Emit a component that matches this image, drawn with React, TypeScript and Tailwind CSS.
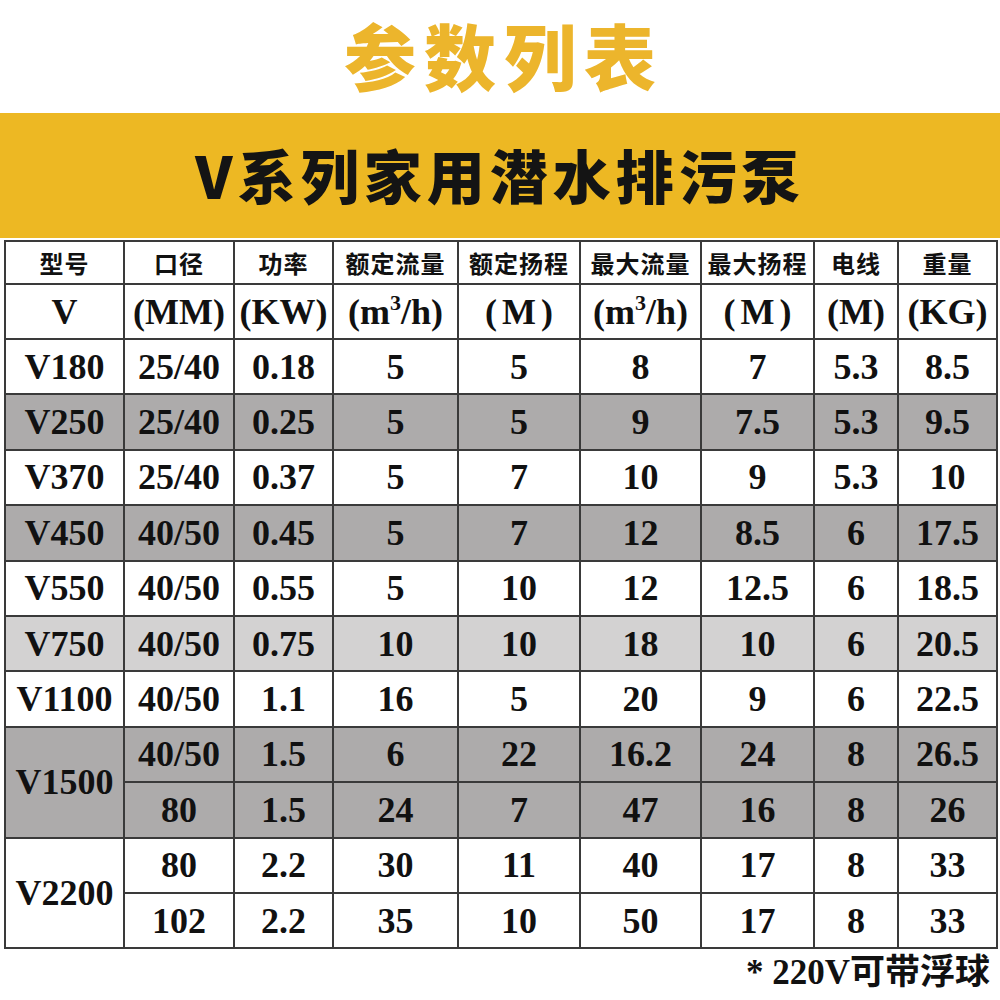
import React from "react";

type Row = {
  model?: string;
  span?: number;
  bg: string;
  cells: string[];
};

const rows: Row[] = [
  { model: "V180", bg: "bg-white", cells: ["25/40", "0.18", "5", "5", "8", "7", "5.3", "8.5"] },
  { model: "V250", bg: "bg-[#adabab]", cells: ["25/40", "0.25", "5", "5", "9", "7.5", "5.3", "9.5"] },
  { model: "V370", bg: "bg-white", cells: ["25/40", "0.37", "5", "7", "10", "9", "5.3", "10"] },
  { model: "V450", bg: "bg-[#adabab]", cells: ["40/50", "0.45", "5", "7", "12", "8.5", "6", "17.5"] },
  { model: "V550", bg: "bg-white", cells: ["40/50", "0.55", "5", "10", "12", "12.5", "6", "18.5"] },
  { model: "V750", bg: "bg-[#d3d2d2]", cells: ["40/50", "0.75", "10", "10", "18", "10", "6", "20.5"] },
  { model: "V1100", bg: "bg-white", cells: ["40/50", "1.1", "16", "5", "20", "9", "6", "22.5"] },
  { model: "V1500", span: 2, bg: "bg-[#adabab]", cells: ["40/50", "1.5", "6", "22", "16.2", "24", "8", "26.5"] },
  { bg: "bg-[#adabab]", cells: ["80", "1.5", "24", "7", "47", "16", "8", "26"] },
  { model: "V2200", span: 2, bg: "bg-white", cells: ["80", "2.2", "30", "11", "40", "17", "8", "33"] },
  { bg: "bg-white", cells: ["102", "2.2", "35", "10", "50", "17", "8", "33"] },
];

const heads = ["型号", "口径", "功率", "额定流量", "额定扬程", "最大流量", "最大扬程", "电线", "重量"];
const widths = [119, 110, 99, 125, 122, 121, 113, 84, 99];

const cell = "border-2 border-[#3a3a3a] text-center align-middle p-0 whitespace-nowrap";

const M3 = () => (
  <>
    (m<sup className="text-[22px] -top-[14px]">3</sup>/h)
  </>
);

const Wide = ({ t }: { t: string }) => (
  <>
    (<span className="mx-[5px]">{t}</span>)
  </>
);

export default function App() {
  return (
    <div
      className="w-[1000px] h-[1000px] bg-white overflow-hidden flex flex-col"
      style={{ fontFamily: '"Liberation Serif", "Noto Sans CJK SC", serif' }}
    >
      {/* title */}
      <div className="h-[113px] flex items-center justify-center">
        <h1
          className="text-[72px] leading-none font-black text-[#ecb52c] tracking-[8px] pl-[8px] mb-[6px]"
          style={{ fontFamily: '"Noto Sans CJK SC", sans-serif' }}
        >
          参数列表
        </h1>
      </div>

      {/* banner */}
      <div className="h-[125px] bg-[#edb823] flex items-center justify-center">
        <h2
          className="text-[58px] leading-none font-black text-[#141414] tracking-[5px] mb-[4px]"
          style={{ fontFamily: '"Noto Sans CJK SC", sans-serif' }}
        >
          V系列家用潜水排污泵
        </h2>
      </div>

      <div className="pt-[2px] pl-[4px]">
        <table className="w-[992px] table-fixed border-collapse font-bold text-[#111]">
          <colgroup>
            {widths.map((w, i) => (
              <col key={i} style={{ width: w }} />
            ))}
          </colgroup>
          <tbody>
            <tr className="h-[43px]">
              {heads.map((h) => (
                <td
                  key={h}
                  className={`${cell} text-[24px] leading-none tracking-[1px]`}
                  style={{ fontFamily: '"Noto Sans CJK SC", sans-serif' }}
                >
                  {h}
                </td>
              ))}
            </tr>
            <tr className="h-[55px] text-[36px] leading-none">
              <td className={cell}>V</td>
              <td className={cell}>(MM)</td>
              <td className={cell}>(KW)</td>
              <td className={cell}>
                <M3 />
              </td>
              <td className={cell}>
                <Wide t="M" />
              </td>
              <td className={cell}>
                <M3 />
              </td>
              <td className={cell}>
                <Wide t="M" />
              </td>
              <td className={cell}>(M)</td>
              <td className={cell}>(KG)</td>
            </tr>
            {rows.map((r, i) => (
              <tr key={i} className={`h-[55.4px] text-[36px] leading-none ${r.bg}`}>
                {r.model && (
                  <td rowSpan={r.span ?? 1} className={cell}>
                    {r.model}
                  </td>
                )}
                {r.cells.map((c, j) => (
                  <td key={j} className={cell}>
                    {c}
                  </td>
                ))}
              </tr>
            ))}
          </tbody>
        </table>
      </div>

      <div className="flex justify-end pr-[10px] pt-[6px]">
        <p className="text-[35px] leading-none font-bold text-[#111]">* 220V可带浮球</p>
      </div>
    </div>
  );
}
